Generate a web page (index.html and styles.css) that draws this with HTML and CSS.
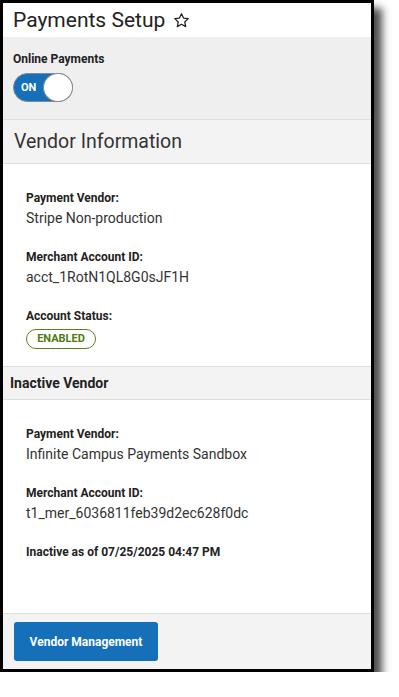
FILE: index.html
```html
<!DOCTYPE html>
<html lang="en">

<head>
  <meta charset="UTF-8">
  <title>Payments Setup</title>
  <link rel="stylesheet" href="styles.css">
</head>

<body>

  <div class="frame">
    <div class="titlebar">
      <h1>Payments Setup</h1>
      <svg class="star" width="17" height="17" viewBox="0 0 24 24">
        <path d="M12 2.5l2.9 6.1 6.6.8-4.9 4.6 1.3 6.6L12 17.3l-5.9 3.3 1.3-6.6-4.9-4.6 6.6-.8z" fill="none" stroke="#222" stroke-width="1.8" stroke-linejoin="round"/>
      </svg>
    </div>

    <div class="online">
      <div class="label">Online Payments</div>
      <div class="toggle">
        <span class="toggle-text">ON</span>
        <span class="knob"></span>
      </div>
    </div>

    <div class="section-header">Vendor Information</div>
    <div class="fields">
      <div class="field">
        <div class="label">Payment Vendor:</div>
        <div class="value">Stripe Non-production</div>
      </div>
      <div class="field">
        <div class="label">Merchant Account ID:</div>
        <div class="value">acct_1RotN1QL8G0sJF1H</div>
      </div>
      <div class="field last">
        <div class="label">Account Status:</div>
        <span class="badge">ENABLED</span>
      </div>
    </div>

    <div class="sub-header">Inactive Vendor</div>
    <div class="fields grow">
      <div class="field">
        <div class="label">Payment Vendor:</div>
        <div class="value">Infinite Campus Payments Sandbox</div>
      </div>
      <div class="field">
        <div class="label">Merchant Account ID:</div>
        <div class="value">t1_mer_6036811feb39d2ec628f0dc</div>
      </div>
      <div class="label">Inactive as of 07/25/2025 04:47 PM</div>
    </div>

    <div class="footer">
      <button class="btn">Vendor Management</button>
    </div>
  </div>

</body>
</html>
```

FILE: styles.css
```css
body { margin: 0; background: #fff; font-family: Roboto, "Liberation Sans", sans-serif; color: #222; }
.frame { width: 368px; height: 666px; border: 3px solid #000; display: flex; flex-direction: column; box-shadow: 8px 8px 8px rgba(0,0,0,0.7); background: #fff; }
.titlebar { height: 34px; padding-left: 10px; display: flex; align-items: center; gap: 8px; }
h1 { margin: 0; font-size: 21px; font-weight: 400; line-height: 34px; color: #222; }
.star { margin-top: 1px; }
.online { background: #efefef; padding: 15px 10px 17px; border-bottom: 1px solid #dedede; }
.label { font-size: 12px; font-weight: 700; line-height: 14px; color: #222; }
.toggle { position: relative; width: 60px; height: 29px; margin-top: 7px; border-radius: 15px; background: #1570b9; box-sizing: border-box; border: 1px solid #7d8a96; }
.toggle-text { position: absolute; left: 7px; top: 7px; font-size: 11px; font-weight: 700; line-height: 13px; color: #fff; }
.knob { position: absolute; right: -1px; top: -1px; width: 30px; height: 29px; border-radius: 50%; background: #fff; box-sizing: border-box; border: 1px solid #8a8a8a; }
.section-header { height: 43px; padding-left: 11px; background: #f3f3f3; border-bottom: 1px solid #dedede; font-size: 19.5px; line-height: 43px; color: #333; }
.fields { padding: 27px 23px 17px; }
.fields.grow { flex: 1; padding-bottom: 0; }
.field { margin-bottom: 22px; }
.field.last { margin-bottom: 0; }
.field .label { margin-bottom: 3px; }
.value { font-size: 14px; line-height: 20px; color: #333; }
.badge { display: inline-block; margin-top: 3px; width: 70px; height: 20px; box-sizing: border-box; border: 1px solid #5f7f1f; border-radius: 10px; text-align: center; font-size: 11px; font-weight: 700; line-height: 18px; color: #4f7a12; }
.sub-header { height: 32px; padding-left: 7px; background: #f3f3f3; border-top: 1px solid #dedede; border-bottom: 1px solid #dedede; font-size: 14px; font-weight: 700; line-height: 32px; color: #222; }
.footer { height: 56px; background: #f3f3f3; border-top: 1px solid #dedede; padding: 8px 11px 0; box-sizing: border-box; }
.btn { width: 144px; height: 39px; border: none; border-radius: 3px; background: #1570b9; color: #fff; font-family: Roboto, "Liberation Sans", sans-serif; font-size: 12px; font-weight: 700; cursor: pointer; }
```
